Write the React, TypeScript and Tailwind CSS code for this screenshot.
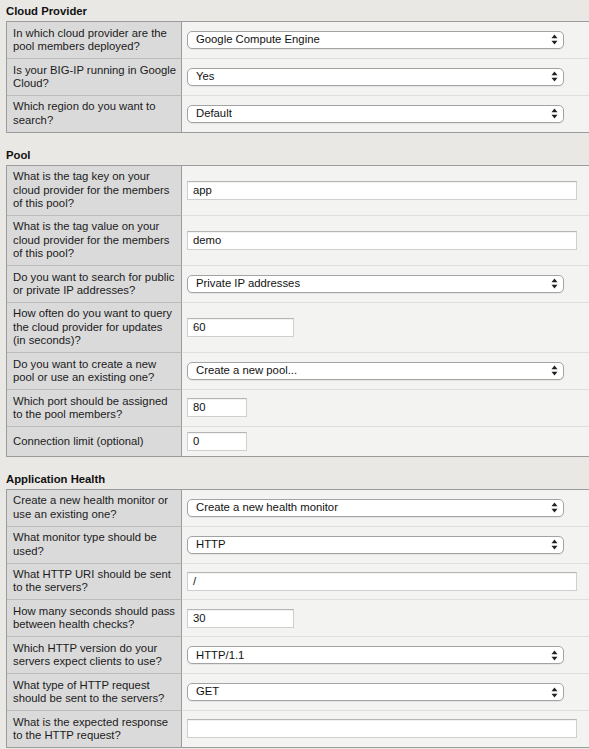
import React from "react";

type Ctl =
  | { kind: "select"; value: string }
  | { kind: "input"; value: string; size: "long" | "medium" | "short" };

type Row = { lines: string[]; ctl: Ctl };

const sections: { title: string; rows: Row[] }[] = [
  {
    title: "Cloud Provider",
    rows: [
      { lines: ["In which cloud provider are the", "pool members deployed?"], ctl: { kind: "select", value: "Google Compute Engine" } },
      { lines: ["Is your BIG-IP running in Google", "Cloud?"], ctl: { kind: "select", value: "Yes" } },
      { lines: ["Which region do you want to", "search?"], ctl: { kind: "select", value: "Default" } },
    ],
  },
  {
    title: "Pool",
    rows: [
      { lines: ["What is the tag key on your", "cloud provider for the members", "of this pool?"], ctl: { kind: "input", value: "app", size: "long" } },
      { lines: ["What is the tag value on your", "cloud provider for the members", "of this pool?"], ctl: { kind: "input", value: "demo", size: "long" } },
      { lines: ["Do you want to search for public", "or private IP addresses?"], ctl: { kind: "select", value: "Private IP addresses" } },
      { lines: ["How often do you want to query", "the cloud provider for updates", "(in seconds)?"], ctl: { kind: "input", value: "60", size: "medium" } },
      { lines: ["Do you want to create a new", "pool or use an existing one?"], ctl: { kind: "select", value: "Create a new pool..." } },
      { lines: ["Which port should be assigned", "to the pool members?"], ctl: { kind: "input", value: "80", size: "short" } },
      { lines: ["Connection limit (optional)"], ctl: { kind: "input", value: "0", size: "short" } },
    ],
  },
  {
    title: "Application Health",
    rows: [
      { lines: ["Create a new health monitor or", "use an existing one?"], ctl: { kind: "select", value: "Create a new health monitor" } },
      { lines: ["What monitor type should be", "used?"], ctl: { kind: "select", value: "HTTP" } },
      { lines: ["What HTTP URI should be sent", "to the servers?"], ctl: { kind: "input", value: "/", size: "long" } },
      { lines: ["How many seconds should pass", "between health checks?"], ctl: { kind: "input", value: "30", size: "medium" } },
      { lines: ["Which HTTP version do your", "servers expect clients to use?"], ctl: { kind: "select", value: "HTTP/1.1" } },
      { lines: ["What type of HTTP request", "should be sent to the servers?"], ctl: { kind: "select", value: "GET" } },
      { lines: ["What is the expected response", "to the HTTP request?"], ctl: { kind: "input", value: "", size: "long" } },
    ],
  },
];

function Arrows() {
  return (
    <svg width="7" height="11" viewBox="0 0 7 11" className="shrink-0">
      <path d="M3.5 0.5 L6.5 4.3 L0.5 4.3 Z" fill="#1f1f1f" />
      <path d="M3.5 10.5 L6.5 6.7 L0.5 6.7 Z" fill="#1f1f1f" />
    </svg>
  );
}

function Control({ ctl }: { ctl: Ctl }) {
  if (ctl.kind === "select") {
    return (
      <div className="h-[18px] w-[377px] rounded-[5px] border border-[#a3a3a3] bg-white flex items-center justify-between pl-[8px] pr-[5px] shadow-[0_1px_1px_rgba(0,0,0,0.06)]">
        <span className="whitespace-nowrap text-[#111]">{ctl.value}</span>
        <Arrows />
      </div>
    );
  }
  const w =
    ctl.size === "long" ? "w-[390px]" : ctl.size === "medium" ? "w-[107px]" : "w-[60px]";
  return (
    <div
      className={`${w} h-[19px] border border-[#cfcfcf] border-t-[#b5b5b5] bg-white flex items-center pl-[5px] shadow-[inset_0_1px_1px_rgba(0,0,0,0.06)]`}
    >
      <span className="whitespace-nowrap text-[#111]">{ctl.value}</span>
    </div>
  );
}

export default function App() {
  return (
    <div className="min-h-screen w-full overflow-hidden bg-[#e9e8e5] pl-[6px] pt-[4px] pb-[6px] font-['Liberation_Sans',Arial,Helvetica,sans-serif] text-[11.3px] leading-[13.3px] text-[#1a1a1a]">
      {sections.map((s, si) => (
        <div key={s.title} className={si === 0 ? "" : "mt-[15px]"}>
          <div className="font-bold leading-[14px] pb-[3px] text-[#111]">{s.title}</div>
          <div className="w-[640px] border-y border-l border-[#9c9c9c]">
            {s.rows.map((r, ri) => (
              <div key={ri} className="flex">
                <div
                  className={`w-[175px] shrink-0 bg-[#dadada] border-r border-[#9c9c9c] px-[6px] py-[4.65px] flex items-center ${
                    ri > 0 ? "border-t border-t-[#bdbdbd]" : ""
                  }`}
                >
                  <div className="whitespace-nowrap">
                    {r.lines.map((l, li) => (
                      <div key={li}>{l}</div>
                    ))}
                  </div>
                </div>
                <div
                  className={`flex-1 bg-[#f3f3f1] flex items-center pl-[5px] py-[5px] ${
                    ri > 0 ? "border-t border-[#e0dfdc]" : ""
                  }`}
                >
                  <Control ctl={r.ctl} />
                </div>
              </div>
            ))}
          </div>
        </div>
      ))}
    </div>
  );
}
